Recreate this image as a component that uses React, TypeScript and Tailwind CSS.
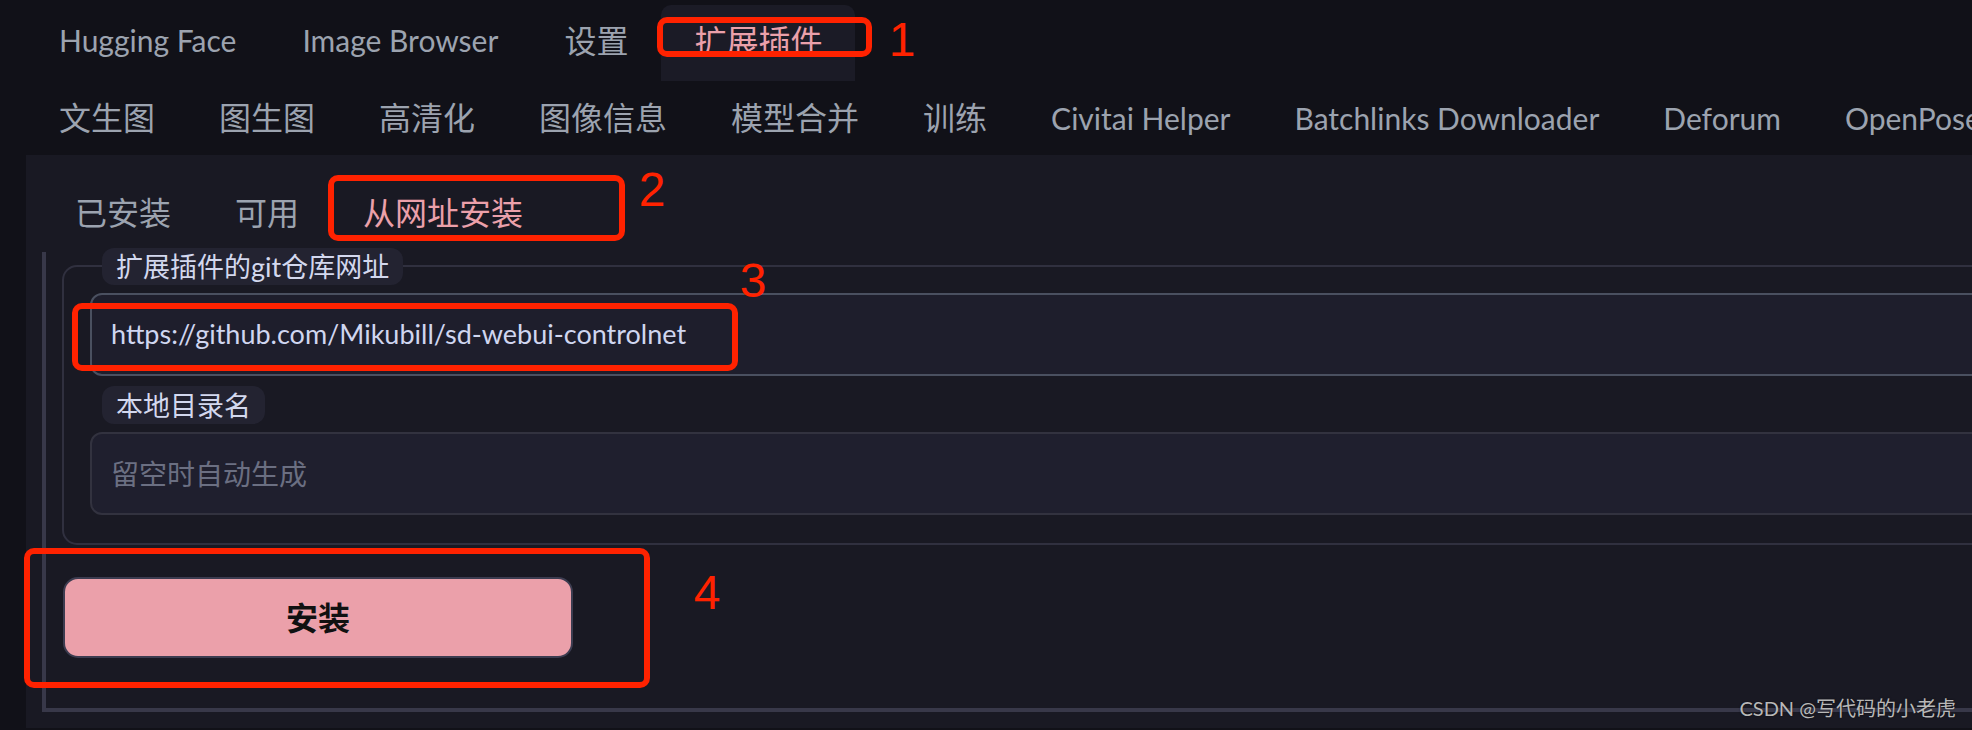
import React from "react";

const topTabs = ["Hugging Face", "Image Browser", "设置", "扩展插件"];
const subTabs = [
  "文生图",
  "图生图",
  "高清化",
  "图像信息",
  "模型合并",
  "训练",
  "Civitai Helper",
  "Batchlinks Downloader",
  "Deforum",
  "OpenPose Editor",
];
const innerTabs = ["已安装", "可用", "从网址安装"];

const FONT = 'Lato, "Noto Sans CJK SC", sans-serif';
const isLatin = (s: string) => /^[\x00-\x7f]+$/.test(s);

function Box({ className }: { className: string }) {
  return <div className={"absolute border-[6px] border-[#ff2200] rounded-[10px] " + className} />;
}

function Digit({ className, children }: { className: string; children: React.ReactNode }) {
  return (
    <div
      className={"absolute w-[40px] text-center text-[48px] leading-none text-[#ff2200] " + className}
      style={{ fontFamily: '"Liberation Sans", Arial, sans-serif' }}
    >
      {children}
    </div>
  );
}

export default function App() {
  return (
    <div
      className="relative w-[1972px] h-[730px] overflow-hidden bg-[#111118]"
      style={{ fontFamily: FONT }}
    >
      {/* top tabs */}
      <nav className="flex h-[81px] pt-[5px] pl-[26px] whitespace-nowrap">
        {topTabs.map((t) => {
          const sel = t === "扩展插件";
          return (
            <div
              key={t}
              className={
                "flex items-center h-[76px] px-[33px] pb-[5px] rounded-t-[10px] " +
                (isLatin(t) ? "text-[30px] " : "text-[32px] ") +
                (sel ? "bg-[#1b1b26] text-[#eba0aa]" : "text-[#9ca3af]")
              }
            >
              {t}
            </div>
          );
        })}
      </nav>

      {/* second tabs */}
      <nav className="flex h-[74px] pl-[27px] whitespace-nowrap">
        {subTabs.map((t) => (
          <div
            key={t}
            className={
              "flex items-center h-[74px] px-[32px] text-[#9ca3af] " +
              (isLatin(t) ? "text-[30px]" : "text-[32px]")
            }
          >
            {t}
          </div>
        ))}
      </nav>

      {/* content panel */}
      <div className="ml-[26px] h-[573px] bg-[#191923]">
        <div className="flex h-[97px] pt-[20px] pl-[17px] whitespace-nowrap">
          {innerTabs.map((t) => {
            const sel = t === "从网址安装";
            return (
              <div
                key={t}
                className={
                  "flex items-center h-[76px] px-[32px] text-[32px] " +
                  (sel ? "text-[#eba0aa]" : "text-[#9ca3af]")
                }
              >
                {t}
              </div>
            );
          })}
        </div>

        <div className="ml-[16px] mr-[-60px] h-[460px] border-l-4 border-b-4 border-[#383849] pl-[16px] pt-[13px]">
          <div className="flex flex-col border-2 border-[#30303f] rounded-[15px] pl-[26px] pb-[28px]">
            <div className="-mt-[19px] ml-[12px] flex w-fit items-center h-[37px] px-[14px] rounded-[12px] bg-[#232331] text-[27px] text-[#d3d8ee] leading-none">
              扩展插件的git仓库网址
            </div>
            <div className="mt-[8px] h-[83px] border-2 border-[#4a5060] rounded-[12px] bg-[#1e1e2c] px-[19px] flex items-center text-[27px] text-[#d0d6f0]">
              https://github.com/Mikubill/sd-webui-controlnet
            </div>
            <div className="mt-[10px] ml-[12px] flex w-fit items-center h-[38px] px-[14px] rounded-[12px] bg-[#232331] text-[27px] text-[#d3d8ee] leading-none">
              本地目录名
            </div>
            <div className="mt-[8px] h-[83px] border-2 border-[#32323f] rounded-[12px] bg-[#1f1f2e] px-[19px] flex items-center text-[28px] text-[#6b6f82]">
              留空时自动生成
            </div>
          </div>

          <button className="mt-[32px] ml-[1px] w-[510px] h-[81px] rounded-[15px] border-2 border-[#3c3c50] bg-[#eba0aa] text-[32px] font-bold text-[#111111] flex items-center justify-center">
            安装
          </button>
        </div>
      </div>

      {/* watermark */}
      <div
        className="absolute right-[16px] top-[694px] text-[20px] leading-[28px] text-[#b8b8b8] whitespace-nowrap"
        style={{ textShadow: "0 0 2px rgba(0,0,0,0.6)" }}
      >
        CSDN @写代码的小老虎
      </div>

      {/* annotations */}
      <Box className="left-[657px] top-[17px] w-[215px] h-[40px]" />
      <Box className="left-[328px] top-[175px] w-[297px] h-[66px]" />
      <Box className="left-[72px] top-[303px] w-[666px] h-[68px]" />
      <Box className="left-[24px] top-[548px] w-[626px] h-[140px]" />
      <Digit className="left-[882px] top-[16px]">1</Digit>
      <Digit className="left-[632px] top-[166px]">2</Digit>
      <Digit className="left-[733px] top-[257px]">3</Digit>
      <Digit className="left-[687px] top-[569px]">4</Digit>
    </div>
  );
}
